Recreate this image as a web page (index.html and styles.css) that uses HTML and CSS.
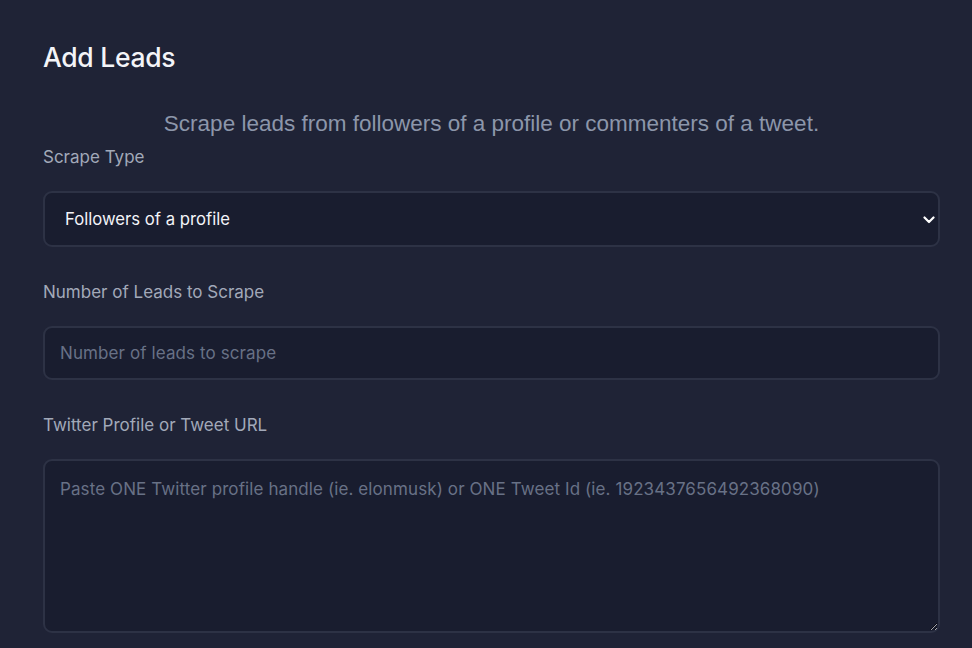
FILE: index.html
```html
<!DOCTYPE html>
<html>
<head>
<meta charset="utf-8">
<link rel="stylesheet" href="styles.css">
</head>
<body>
<main class="page">
  <h1 class="title">Add Leads</h1>
  <p class="subtitle">Scrape leads from followers of a profile or commenters of a tweet.</p>
  <form class="form">
    <label class="label">Scrape Type</label>
    <div class="select-wrap">
      <select class="field select">
        <option>Followers of a profile</option>
        <option>Commenters of a tweet</option>
      </select>
      <svg class="chevron" width="12" height="8" viewBox="0 0 12 8"><path d="M1.5 1.5 L6 6 L10.5 1.5" fill="none" stroke="#ffffff" stroke-width="2.2" stroke-linecap="round" stroke-linejoin="round"/></svg>
    </div>
    <label class="label gap">Number of Leads to Scrape</label>
    <input class="field input" type="text" placeholder="Number of leads to scrape">
    <label class="label gap">Twitter Profile or Tweet URL</label>
    <textarea class="field textarea" placeholder="Paste ONE Twitter profile handle (ie. elonmusk) or ONE Tweet Id (ie. 1923437656492368090)"></textarea>
  </form>
</main>
</body>
</html>
```
FILE: styles.css
```css
html, body {
  margin: 0;
  padding: 0;
  background: #1f2336;
  height: 100%;
  overflow: hidden;
}
.page {
  padding: 40px 32px 0 43px;
  font-family: Inter, "Liberation Sans", sans-serif;
}
.title {
  margin: 0;
  font-size: 26.5px;
  font-weight: 500;
  color: #f3f4f8;
  line-height: 34px;
  letter-spacing: -0.3px;
}
.subtitle {
  margin: 38px 0 0 0;
  text-align: center;
  font-family: "Liberation Sans", Arial, sans-serif;
  font-size: 22.5px;
  line-height: 24px;
  color: #8c96aa;
}
.form {
  display: flex;
  flex-direction: column;
  margin-top: 11px;
}
.label {
  font-size: 17px;
  line-height: 20px;
  color: #a2a9b9;
  font-weight: 400;
}
.label.gap {
  margin-top: 35px;
}
.select-wrap {
  position: relative;
  margin-top: 24px;
}
.field {
  box-sizing: border-box;
  width: 100%;
  background: #191d2f;
  border: 2px solid #2d3245;
  border-radius: 9px;
  color: #f3f4f8;
  font-family: Inter, "Liberation Sans", sans-serif;
  font-size: 17px;
  letter-spacing: 0.1px;
  outline: none;
  margin: 0;
}
.select {
  appearance: none;
  -webkit-appearance: none;
  height: 56px;
  padding: 0 40px 0 20px;
  font-size: 16.7px;
  letter-spacing: 0;
}
.chevron {
  position: absolute;
  right: 5px;
  top: 25px;
}
.input {
  margin-top: 24px;
  height: 54px;
  padding: 0 15px;
}
.textarea {
  margin-top: 24px;
  height: 174px;
  padding: 18px 15px;
  resize: vertical;
  line-height: 20px;
}
.field::placeholder {
  color: #687186;
}
```
